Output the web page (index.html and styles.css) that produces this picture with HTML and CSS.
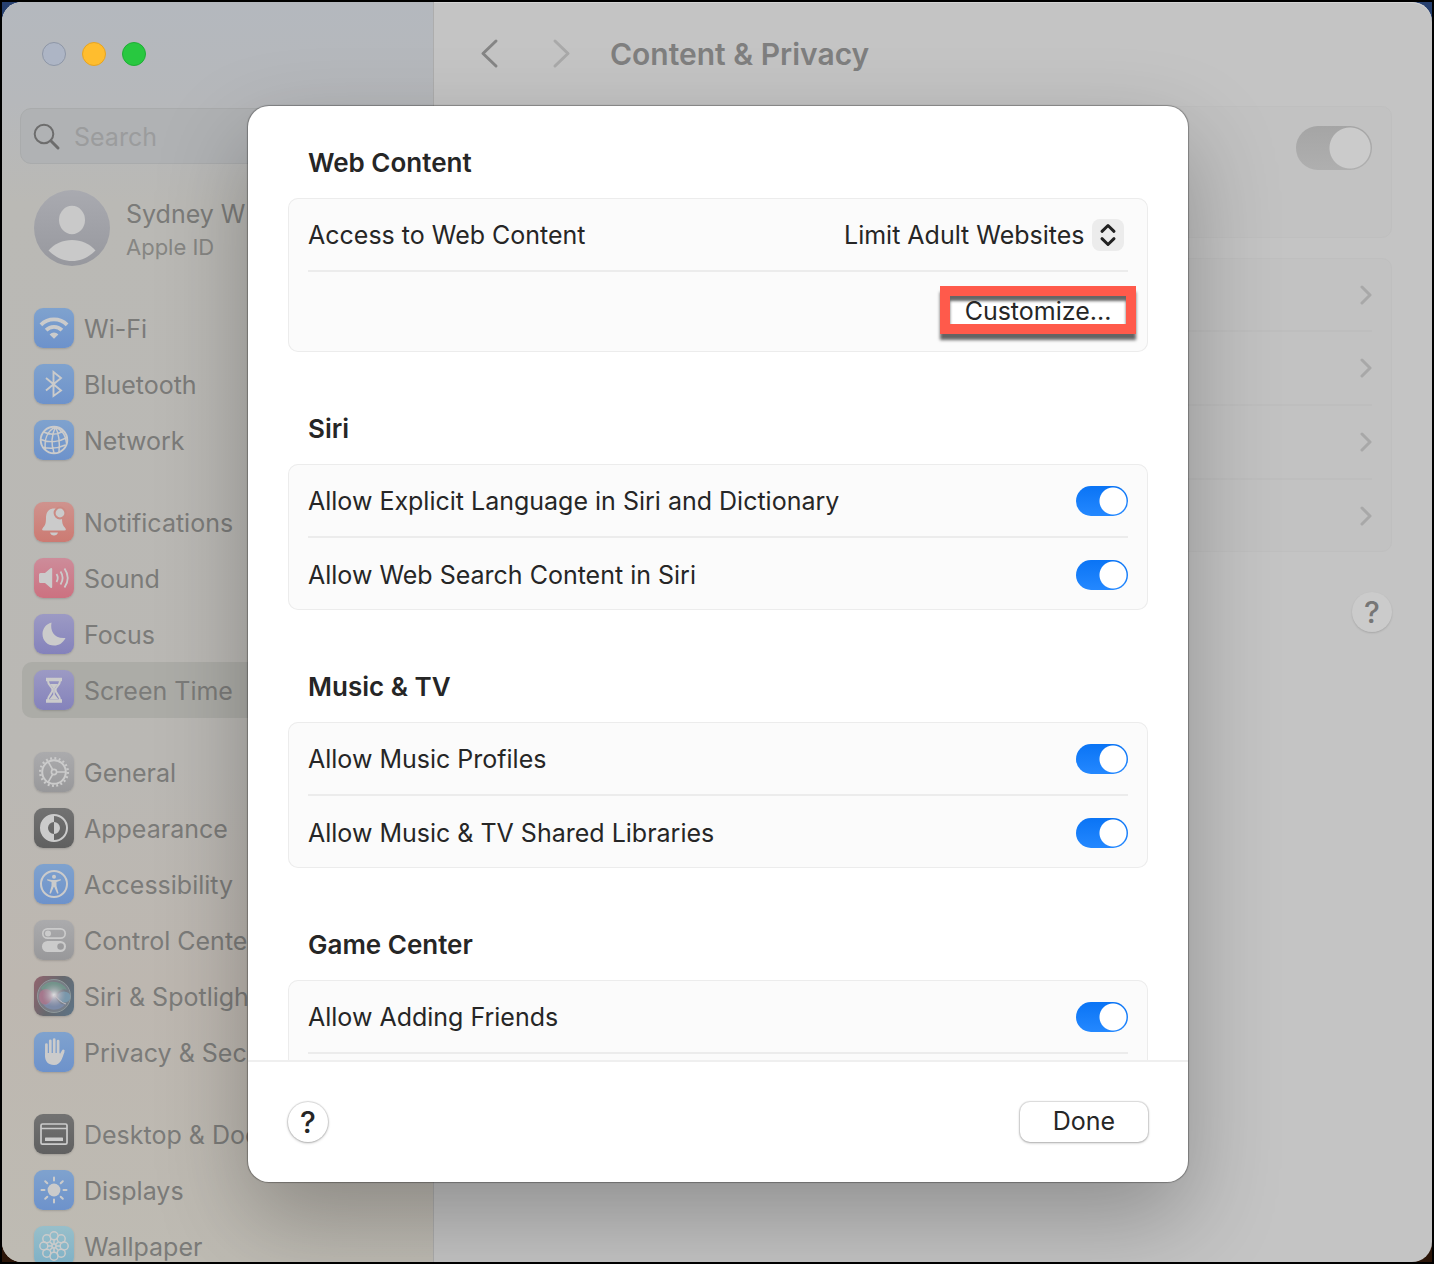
FILE: index.html
```html
<!DOCTYPE html>
<html lang="en">
<head>
<meta charset="utf-8">
<meta name="viewport" content="width=device-width, initial-scale=1">
<title>Content &amp; Privacy</title>
<link rel="stylesheet" href="styles.css">
</head>
<body>
<div class="desktop">
<div class="window">
  <aside class="sidebar">
    <div class="traffic">
      <button class="light light-close" aria-label="Close"></button>
      <button class="light light-min" aria-label="Minimize"></button>
      <button class="light light-max" aria-label="Zoom"></button>
    </div>
    <div class="search">
      <svg class="search-icon" viewBox="0 0 28 28" aria-hidden="true"><circle cx="11" cy="11" r="9.3"/><path d="M17.8 17.8 25 25" stroke-width="3"/></svg>
      <input class="search-input" type="search" placeholder="Search" aria-label="Search">
    </div>
    <a class="account" href="#account">
      <svg class="avatar" viewBox="0 0 76 76" aria-hidden="true">
        <defs><linearGradient id="av" x2="0" y2="1"><stop offset="0" stop-color="#a9aab0"/><stop offset="1" stop-color="#97989e"/></linearGradient></defs>
        <circle cx="38" cy="38" r="38" fill="url(#av)"/>
        <ellipse cx="38" cy="30" rx="13" ry="14.200" fill="#c9c9c9"/>
        <path d="M14.500 60.500C20 54 29 50 38 50s18 4 23.500 10.500C55 67 47 71 38 71s-17-4-23.500-10.500z" fill="#c9c9c9"/>
      </svg>
      <span class="account-text"><span class="account-name">Sydney W</span><span class="account-sub">Apple ID</span></span>
    </a>
    <nav class="nav">
      <div class="nav-group">
        <a class="nav-item" href="#wifi"><span class="tile blue"><svg viewBox="0 0 40 40"><g class="s" stroke-width="3.800" stroke-linecap="butt"><path d="M6.900 16.900A18.500 18.500 0 0 1 33.100 16.900M12.100 22.100A11.200 11.200 0 0 1 27.900 22.100"/></g><path class="f" d="M20 30.800 15.600 26.400A6.200 6.200 0 0 1 24.400 26.400z"/></svg></span><span class="nav-label">Wi-Fi</span></a>
        <a class="nav-item" href="#bluetooth"><span class="tile blue"><svg viewBox="0 0 40 40"><path class="s" stroke-width="1.900" stroke-linejoin="miter" d="M12 14 27 26.500 19.500 32V8L27 14 12 26.500"/></svg></span><span class="nav-label">Bluetooth</span></a>
        <a class="nav-item" href="#network"><span class="tile blue"><svg viewBox="0 0 40 40"><g class="s" stroke-width="1.500"><circle cx="20" cy="20" r="13.300" stroke-width="1.900"/><path d="M21.500 7C13 11 10 20 11.500 30M21.500 7C18 14 17 24 20 33M21.500 7C25 14 26 22 25 32M21.500 7C28 10 32 16 32.500 23M9.500 12C16 15 23 15 29.500 11M7 19.500C15 23 25 22 33 17.500M9.500 27.500C17 29 25 28 31.500 25"/></g></svg></span><span class="nav-label">Network</span></a>
      </div>
      <div class="nav-group">
        <a class="nav-item" href="#notifications"><span class="tile red"><svg viewBox="0 0 40 40"><path class="f" d="M20 6.500c-6 0-8 4.500-8 9.500 0 6-1 7.500-3.200 10-1 1.200-1 2.600.7 2.600h21c1.700 0 1.700-1.400.7-2.600-2.200-2.500-3.200-4-3.200-10 0-5-2-9.500-8-9.500zM16 30.500h8c-.5 2-2 3-4 3s-3.500-1-4-3z"/><circle class="f" cx="26" cy="11" r="5.400" stroke="#cb8a83" stroke-width="2"/></svg></span><span class="nav-label">Notifications</span></a>
        <a class="nav-item" href="#sound"><span class="tile pink"><svg viewBox="0 0 40 40"><path class="f" d="M5 16.500q0-1.500 1.500-1.500H11l5.500-4.700q1.700-1 1.700.8v17.800q0 1.800-1.700.8L11 25H6.500Q5 25 5 23.500z"/><g class="s" stroke-width="1.800"><path d="M22.500 16q2.500 4 0 8M26.500 13.500q4.300 6.500 0 13M30.500 10.500q6.500 9.500 0 19"/></g></svg></span><span class="nav-label">Sound</span></a>
        <a class="nav-item" href="#focus"><span class="tile violet"><svg viewBox="0 0 40 40"><path class="f" d="M17.500 8.500C16 17 20 25 31.500 24 29 29 25 31.500 20 31.500 13.500 31.500 8.500 26.500 8.500 20.200 8.500 14.500 12 10 17.500 8.500z"/></svg></span><span class="nav-label">Focus</span></a>
        <a class="nav-item selected" href="#screentime" aria-current="page"><span class="tile violet"><svg viewBox="0 0 40 40"><path class="s" stroke-width="2" d="M13 8.700h14v1.600H13zM13 30.200h14v1.600H13zM14 11c0 5 4.500 5.500 4.500 9S14 25 14 30M26 11c0 5-4.500 5.500-4.500 9s4.500 5 4.500 10"/><path class="f" d="M16 14h8c-1 2-2.700 2.800-3.200 4.300v6.200l3.500 4.500h-8.600l3.500-4.500v-6.200c-.5-1.500-2.200-2.300-3.200-4.300z"/></svg></span><span class="nav-label">Screen Time</span></a>
      </div>
      <div class="nav-group">
        <a class="nav-item" href="#general"><span class="tile gray"><svg viewBox="0 0 40 40"><g class="s"><circle cx="20" cy="20" r="11.800" stroke-width="2"/><circle cx="20" cy="20" r="13.800" stroke-width="2.400" stroke-dasharray="1.900 2.435"/><circle cx="20" cy="20" r="2.600" stroke-width="1.600"/><path stroke-width="1.700" d="M23 20h8M18.500 17.400l-4.300-7.500M18.500 22.600l-4.300 7.500"/></g></svg></span><span class="nav-label">General</span></a>
        <a class="nav-item" href="#appearance"><span class="tile dark"><svg viewBox="0 0 40 40"><circle class="s" cx="20" cy="20" r="13" stroke-width="2"/><path class="f" d="M20 7a13 13 0 0 0 0 26v-7a6 6 0 0 1 0-12zM20 14a6 6 0 0 1 0 12z"/></svg></span><span class="nav-label">Appearance</span></a>
        <a class="nav-item" href="#accessibility"><span class="tile blue"><svg viewBox="0 0 40 40"><circle class="s" cx="20" cy="20" r="13" stroke-width="2"/><circle class="f" cx="20" cy="12.700" r="2"/><path class="f" d="M13.500 15.200 18 16h4l4.500-.8q1.300.5 0 1.300L22.500 18v4l2 7q-.5 1.200-1.500.3L20.300 23h-.6L17 29.300q-1 .9-1.500-.3l2-7v-4l-4-1.500q-1.300-.8 0-1.300z"/></svg></span><span class="nav-label">Accessibility</span></a>
        <a class="nav-item" href="#control"><span class="tile gray"><svg viewBox="0 0 40 40"><rect class="s" x="8.800" y="8.800" width="22.400" height="9.400" rx="4.700" stroke-width="1.700"/><circle class="f" cx="14" cy="13.500" r="3"/><rect class="f" x="8" y="21" width="24" height="11" rx="5.500"/><circle cx="26.600" cy="26.500" r="3.300" fill="#9b9b9d"/></svg></span><span class="nav-label">Control Center</span></a>
        <a class="nav-item" href="#siri"><span class="tile siri"><svg viewBox="0 0 40 40">
          <defs><radialGradient id="sc"><stop offset="0" stop-color="#e2e0e2"/><stop offset=".35" stop-color="#c4c0c8" stop-opacity=".7"/><stop offset="1" stop-color="#a9a5b0" stop-opacity="0"/></radialGradient></defs>
          <circle cx="20" cy="20" r="16.500" fill="#858b94" fill-opacity=".6" stroke="#8f999b" stroke-width="1"/>
          <path d="M7 12C13 3 28 4 33 14c-5-2-8 1-13 6C15 16 10 18 7 12z" fill="#6d9d8c" fill-opacity=".7"/>
          <ellipse cx="12" cy="21" rx="7" ry="8" fill="#b97490" fill-opacity=".65"/>
          <ellipse cx="30" cy="21" rx="6.500" ry="5.500" fill="#7aa3bb" fill-opacity=".7"/>
          <path d="M9 28c5 2 8-4 11-8 3 4 7 10 11 8-4 7-17 8-22 0z" fill="#7e93bd" fill-opacity=".6"/>
          <circle cx="20" cy="19" r="12" fill="url(#sc)"/>
          <path d="M20 19c4 3 7 8 12 9" fill="none" stroke="#cfcbd0" stroke-width="1" stroke-opacity=".8"/>
        </svg></span><span class="nav-label">Siri &amp; Spotlight</span></a>
        <a class="nav-item" href="#privacy"><span class="tile blue"><svg viewBox="0 0 40 40"><g class="s" stroke-width="2.700" stroke-linecap="round"><path d="M12.400 12.500V24M16.300 8.800V22M20.200 7.500V22M24.100 9V22M25.500 25.500 29.300 18.800"/></g><path class="f" d="M11 21h14.500l1 2 1.500-3.500 2.500.5c-2 4.500-3 13-10.500 13-6 0-9-4-9-9z"/></svg></span><span class="nav-label">Privacy &amp; Security</span></a>
      </div>
      <div class="nav-group">
        <a class="nav-item" href="#desktop"><span class="tile dark"><svg viewBox="0 0 40 40"><rect class="s" x="7" y="10" width="26" height="20.200" rx="1.500" stroke-width="1.700"/><path class="s" stroke-width="1.500" d="M7 14.400h26"/><rect class="f" x="11" y="23.400" width="18" height="3.600" rx=".6"/></svg></span><span class="nav-label">Desktop &amp; Dock</span></a>
        <a class="nav-item" href="#displays"><span class="tile blue"><svg viewBox="0 0 40 40"><circle class="f" cx="20" cy="20" r="6.400"/><path class="s" stroke-width="2" stroke-linecap="round" d="M20 7.500v3M20 29.500v3M7.500 20h3M29.500 20h3M11.200 11.200l2.100 2.100M26.700 26.700l2.100 2.100M11.200 28.800l2.100-2.100M26.700 13.300l2.100-2.100"/></svg></span><span class="nav-label">Displays</span></a>
        <a class="nav-item" href="#wallpaper"><span class="tile teal"><svg viewBox="0 0 40 40"><g class="s" stroke-width="1.500"><circle cx="20" cy="9.800" r="4"/><circle cx="27.200" cy="12.800" r="4"/><circle cx="30.200" cy="20" r="4"/><circle cx="27.200" cy="27.200" r="4"/><circle cx="20" cy="30.200" r="4"/><circle cx="12.800" cy="27.200" r="4"/><circle cx="9.800" cy="20" r="4"/><circle cx="12.800" cy="12.800" r="4"/><circle cx="20" cy="20" r="2"/><path d="M20 14v4M20 22v4M14 20h4M22 20h4M16 16l2.500 2.500M21.500 21.500 24 24M16 24l2.500-2.500M21.500 18.500 24 16"/></g></svg></span><span class="nav-label">Wallpaper</span></a>
      </div>
    </nav>
  </aside>

  <main class="main">
    <header class="toolbar">
      <button class="nav-arrow" aria-label="Back"><svg viewBox="0 0 20 32"><path d="M17 3 4 15.500 17 28" /></svg></button>
      <button class="nav-arrow faded" aria-label="Forward"><svg viewBox="0 0 20 32"><path d="M3 3 16 15.500 3 28"/></svg></button>
      <h1 class="title">Content &amp; Privacy</h1>
    </header>
    <div class="main-body">
      <section class="panel panel-top"><input class="switch-large" type="checkbox" checked aria-label="Content &amp; Privacy"></section>
      <section class="panel panel-list">
        <a class="link-row" href="#store" aria-label="Store Restrictions"><svg class="chevron" viewBox="0 0 12 20"><path d="M2 2 10 10 2 18"/></svg></a>
        <a class="link-row" href="#apps" aria-label="App Restrictions"><svg class="chevron" viewBox="0 0 12 20"><path d="M2 2 10 10 2 18"/></svg></a>
        <a class="link-row" href="#content" aria-label="Content Restrictions"><svg class="chevron" viewBox="0 0 12 20"><path d="M2 2 10 10 2 18"/></svg></a>
        <a class="link-row" href="#preferences" aria-label="Preference Restrictions"><svg class="chevron" viewBox="0 0 12 20"><path d="M2 2 10 10 2 18"/></svg></a>
      </section>
      <button class="help help-dim">?</button>
    </div>
  </main>

  <div class="overlay">
    <div class="dialog" role="dialog" aria-label="Content Restrictions">
      <div class="dialog-scroll">
        <section class="section">
          <h2 class="section-title">Web Content</h2>
          <div class="card">
            <div class="row">
              <label for="web">Access to Web Content</label>
              <div class="popup">
                <select class="popup-select" id="web"><option>Limit Adult Websites</option></select>
                <svg class="stepper" viewBox="0 0 32 32" aria-hidden="true"><path d="M10 12.300 16 6.500 22 12.300M10 19.700 16 25.500 22 19.700"/></svg>
              </div>
            </div>
            <div class="row row-action"><button class="customize">Customize...</button></div>
          </div>
        </section>
        <section class="section">
          <h2 class="section-title">Siri</h2>
          <div class="card">
            <div class="row"><label for="s1">Allow Explicit Language in Siri and Dictionary</label><input class="switch" id="s1" type="checkbox" checked></div>
            <div class="row"><label for="s2">Allow Web Search Content in Siri</label><input class="switch" id="s2" type="checkbox" checked></div>
          </div>
        </section>
        <section class="section">
          <h2 class="section-title">Music &amp; TV</h2>
          <div class="card">
            <div class="row"><label for="m1">Allow Music Profiles</label><input class="switch" id="m1" type="checkbox" checked></div>
            <div class="row"><label for="m2">Allow Music &amp; TV Shared Libraries</label><input class="switch" id="m2" type="checkbox" checked></div>
          </div>
        </section>
        <section class="section">
          <h2 class="section-title">Game Center</h2>
          <div class="card">
            <div class="row"><label for="g1">Allow Adding Friends</label><input class="switch" id="g1" type="checkbox" checked></div>
            <div class="row"></div>
          </div>
        </section>
      </div>
      <footer class="dialog-footer">
        <button class="help">?</button>
        <button class="done">Done</button>
      </footer>
    </div>
  </div>
</div>
</div>
</body>
</html>
```
FILE: styles.css
```css
* { box-sizing: border-box; }

body {
  margin: 0;
  background: #000;
  font-family: Inter, "Liberation Sans", sans-serif;
  font-size: 25px;
  line-height: 30px;
  color: #262626;
}

button, input, select { font: inherit; color: inherit; }
button { padding: 0; border: 0; cursor: pointer; }
a { color: inherit; text-decoration: none; }

.desktop {
  height: 100vh;
  border: 2px solid #000;
  background: linear-gradient(#27406f, #2b1508);
}

.window {
  position: relative;
  display: flex;
  height: 100%;
  border-radius: 20px;
  overflow: hidden;
  background: #c4c4c4;
  box-shadow: inset 0 1px 0 #d4d4d4;
}

/* Sidebar */
.sidebar {
  flex: none;
  width: 432px;
  border-right: 1px solid #adadad;
  background: linear-gradient(#b4b8be 0, #b6b8bb 100px, #bab9b5 200px, #bab8b4 60%, #bdb7b0 78%, #bebbb3 100%);
  color: #7b7b79;
}

.traffic { display: flex; gap: 16px; padding: 40px 40px 0; }
.light { width: 24px; height: 24px; border-radius: 50%; }
.light-close { background: #adb5c5; border: 1px solid #8e96a6; }
.light-min { background: #ffbd2e; border: 1px solid #e5a323; }
.light-max { background: #28c840; border: 1px solid #1fae35; }

.search {
  display: flex;
  align-items: center;
  gap: 13px;
  height: 56px;
  margin: 42px 18px 0;
  padding: 2px 12px 0;
  border: 1px solid #a9abac;
  border-radius: 11px;
  background: #b0b2b4;
}
.search-icon { flex: none; width: 28px; height: 28px; fill: none; stroke: #6d6d6d; stroke-width: 2; stroke-linecap: round; }
.search-input { flex: 1; min-width: 0; padding: 0; border: 0; outline: 0; background: transparent; }
.search-input::placeholder { color: #9b9c9d; }

.account { display: flex; align-items: center; gap: 16px; margin: 26px 32px 34px; }
.avatar { flex: none; width: 76px; height: 76px; }
.account-text { display: flex; flex-direction: column; gap: 4px; padding-top: 4px; }
.account-sub { font-size: 22px; line-height: 28px; color: #868683; }

.nav { display: flex; flex-direction: column; gap: 26px; padding: 0 20px; }
.nav-item {
  display: flex;
  align-items: center;
  gap: 10px;
  height: 56px;
  padding: 0 12px;
  border-radius: 10px;
  white-space: nowrap;
}
.nav-item.selected { background: #acaca7; }
.nav-label { padding-top: 2px; }

.tile { flex: none; width: 40px; height: 40px; border-radius: 9px; overflow: hidden; box-shadow: 0 1px 2px rgba(0, 0, 0, .15); }
.tile svg { display: block; width: 40px; height: 40px; }
.s { fill: none; stroke: #cbcbcb; }
.f { fill: #cbcbcb; }
.blue { background: linear-gradient(#7fa2ce, #6d92cb); }
.red { background: linear-gradient(#cf938e, #cc7a72); }
.pink { background: linear-gradient(#cd8c9a, #cc7180); }
.violet { background: linear-gradient(#9c9ac4, #8482bb); }
.gray { background: linear-gradient(#ababad, #98989a); }
.dark { background: linear-gradient(#727272, #606060); }
.teal { background: linear-gradient(#98bfca, #7db0c6); }
.siri { background: linear-gradient(115deg, #93646e, #66696e 50%, #5d7487); }

/* Main pane */
.main { flex: 1; min-width: 0; color: #7f7f7f; }
.toolbar { display: flex; align-items: center; height: 104px; padding: 0 45px; }
.nav-arrow { width: 20px; height: 32px; margin-right: 53px; background: none; }
.nav-arrow svg { display: block; width: 20px; height: 32px; fill: none; stroke: #858585; stroke-width: 3; stroke-linecap: round; stroke-linejoin: round; }
.nav-arrow.faded { margin-right: 38px; }
.nav-arrow.faded svg { stroke: #a9a9a9; }
.title { margin: 0; font-size: 30px; line-height: 36px; font-weight: 600; }
.main-body { display: flex; flex-direction: column; gap: 20px; padding: 0 40px; }
.panel { border: 1px solid #bfbfbf; border-radius: 10px; background: #c2c2c2; }
.panel-top { display: flex; justify-content: flex-end; height: 132px; padding: 19px; }
.switch-large {
  appearance: none;
  width: 76px;
  height: 44px;
  margin: 0;
  border-radius: 22px;
  background: radial-gradient(circle at 54px 22px, #cbcbcb 20px, transparent 21px), linear-gradient(#a5a5a5, #afafaf);
}
.link-row { display: flex; align-items: center; justify-content: flex-end; height: 71px; margin: 0 19px; }
.link-row + .link-row { height: 74px; border-top: 2px solid #bebebe; }
.link-row:last-child { margin-bottom: -1px; }
.chevron { width: 12px; height: 20px; fill: none; stroke: #a8a8a8; stroke-width: 3; stroke-linecap: round; stroke-linejoin: round; }

.help {
  width: 40px;
  height: 40px;
  border-radius: 50%;
  background: #fff;
  font-size: 30px;
  font-weight: 500;
  box-shadow: 0 0 1px 1px rgba(0, 0, 0, .12), 0 1px 3px rgba(0, 0, 0, .25);
}
.help-dim { align-self: flex-end; margin-top: 20px; background: #cbcbcb; color: #767676; box-shadow: 0 1px 2px rgba(0, 0, 0, .15); }

/* Restrictions sheet */
.overlay {
  position: absolute;
  inset: 0;
  display: flex;
  justify-content: center;
  padding: 104px 0 80px 2px;
}
.dialog {
  display: flex;
  flex-direction: column;
  width: 940px;
  max-width: 90%;
  border-radius: 21px;
  overflow: hidden;
  background: #fff;
  box-shadow: 0 0 1px 1px rgba(0, 0, 0, .3), 0 36px 90px rgba(0, 0, 0, .27);
}
.dialog-scroll { flex: 1; min-height: 0; overflow: hidden; padding: 42px 40px 0; }
.section { margin-bottom: 62px; }
.section-title { margin: 0 20px 20px; font-size: 26px; line-height: 30px; font-weight: 600; }
.card { border-radius: 10px; background: #fbfbfb; box-shadow: inset 0 0 0 1px #ececec; padding: 0 20px; }
.row { display: flex; align-items: center; justify-content: space-between; height: 72px; padding-top: 2px; }
.row + .row { height: 74px; border-top: 2px solid #ececec; }
.row + .row-action { height: 82px; justify-content: flex-end; padding: 0 0 4px; }

.popup { position: relative; margin-right: 4px; }
.popup-select {
  appearance: none;
  display: block;
  height: 32px;
  padding: 0 39px 0 0;
  border: 0;
  background: transparent;
}
.stepper {
  position: absolute;
  top: 0;
  right: 0;
  width: 32px;
  height: 32px;
  border-radius: 8px;
  background: #ececec;
  fill: none;
  stroke: #222;
  stroke-width: 3;
  stroke-linecap: round;
  stroke-linejoin: round;
  pointer-events: none;
}

.customize {
  width: 196px;
  height: 48px;
  margin-right: -8px;
  padding-top: 2px;
  border: 10px solid #ff5a4b;
  background: #fff;
  line-height: 26px;
  box-shadow: 0 6px 3px rgba(0, 0, 0, .6), inset 0 5px 3px rgba(0, 0, 0, .6);
}

.switch {
  appearance: none;
  flex: none;
  width: 52px;
  height: 30px;
  margin: 0;
  border-radius: 15px;
  background: radial-gradient(circle at 37px 15px, #fff 13px, transparent 14px), linear-gradient(#0a74f5, #2488ff);
}

.dialog-footer {
  display: flex;
  align-items: center;
  justify-content: space-between;
  height: 122px;
  padding: 0 40px;
  border-top: 2px solid #efefef;
}
.done {
  width: 128px;
  height: 40px;
  padding-bottom: 2px;
  border-radius: 10px;
  background: #fff;
  box-shadow: 0 0 1px 1px rgba(0, 0, 0, .12), 0 1px 3px rgba(0, 0, 0, .25);
}
```
